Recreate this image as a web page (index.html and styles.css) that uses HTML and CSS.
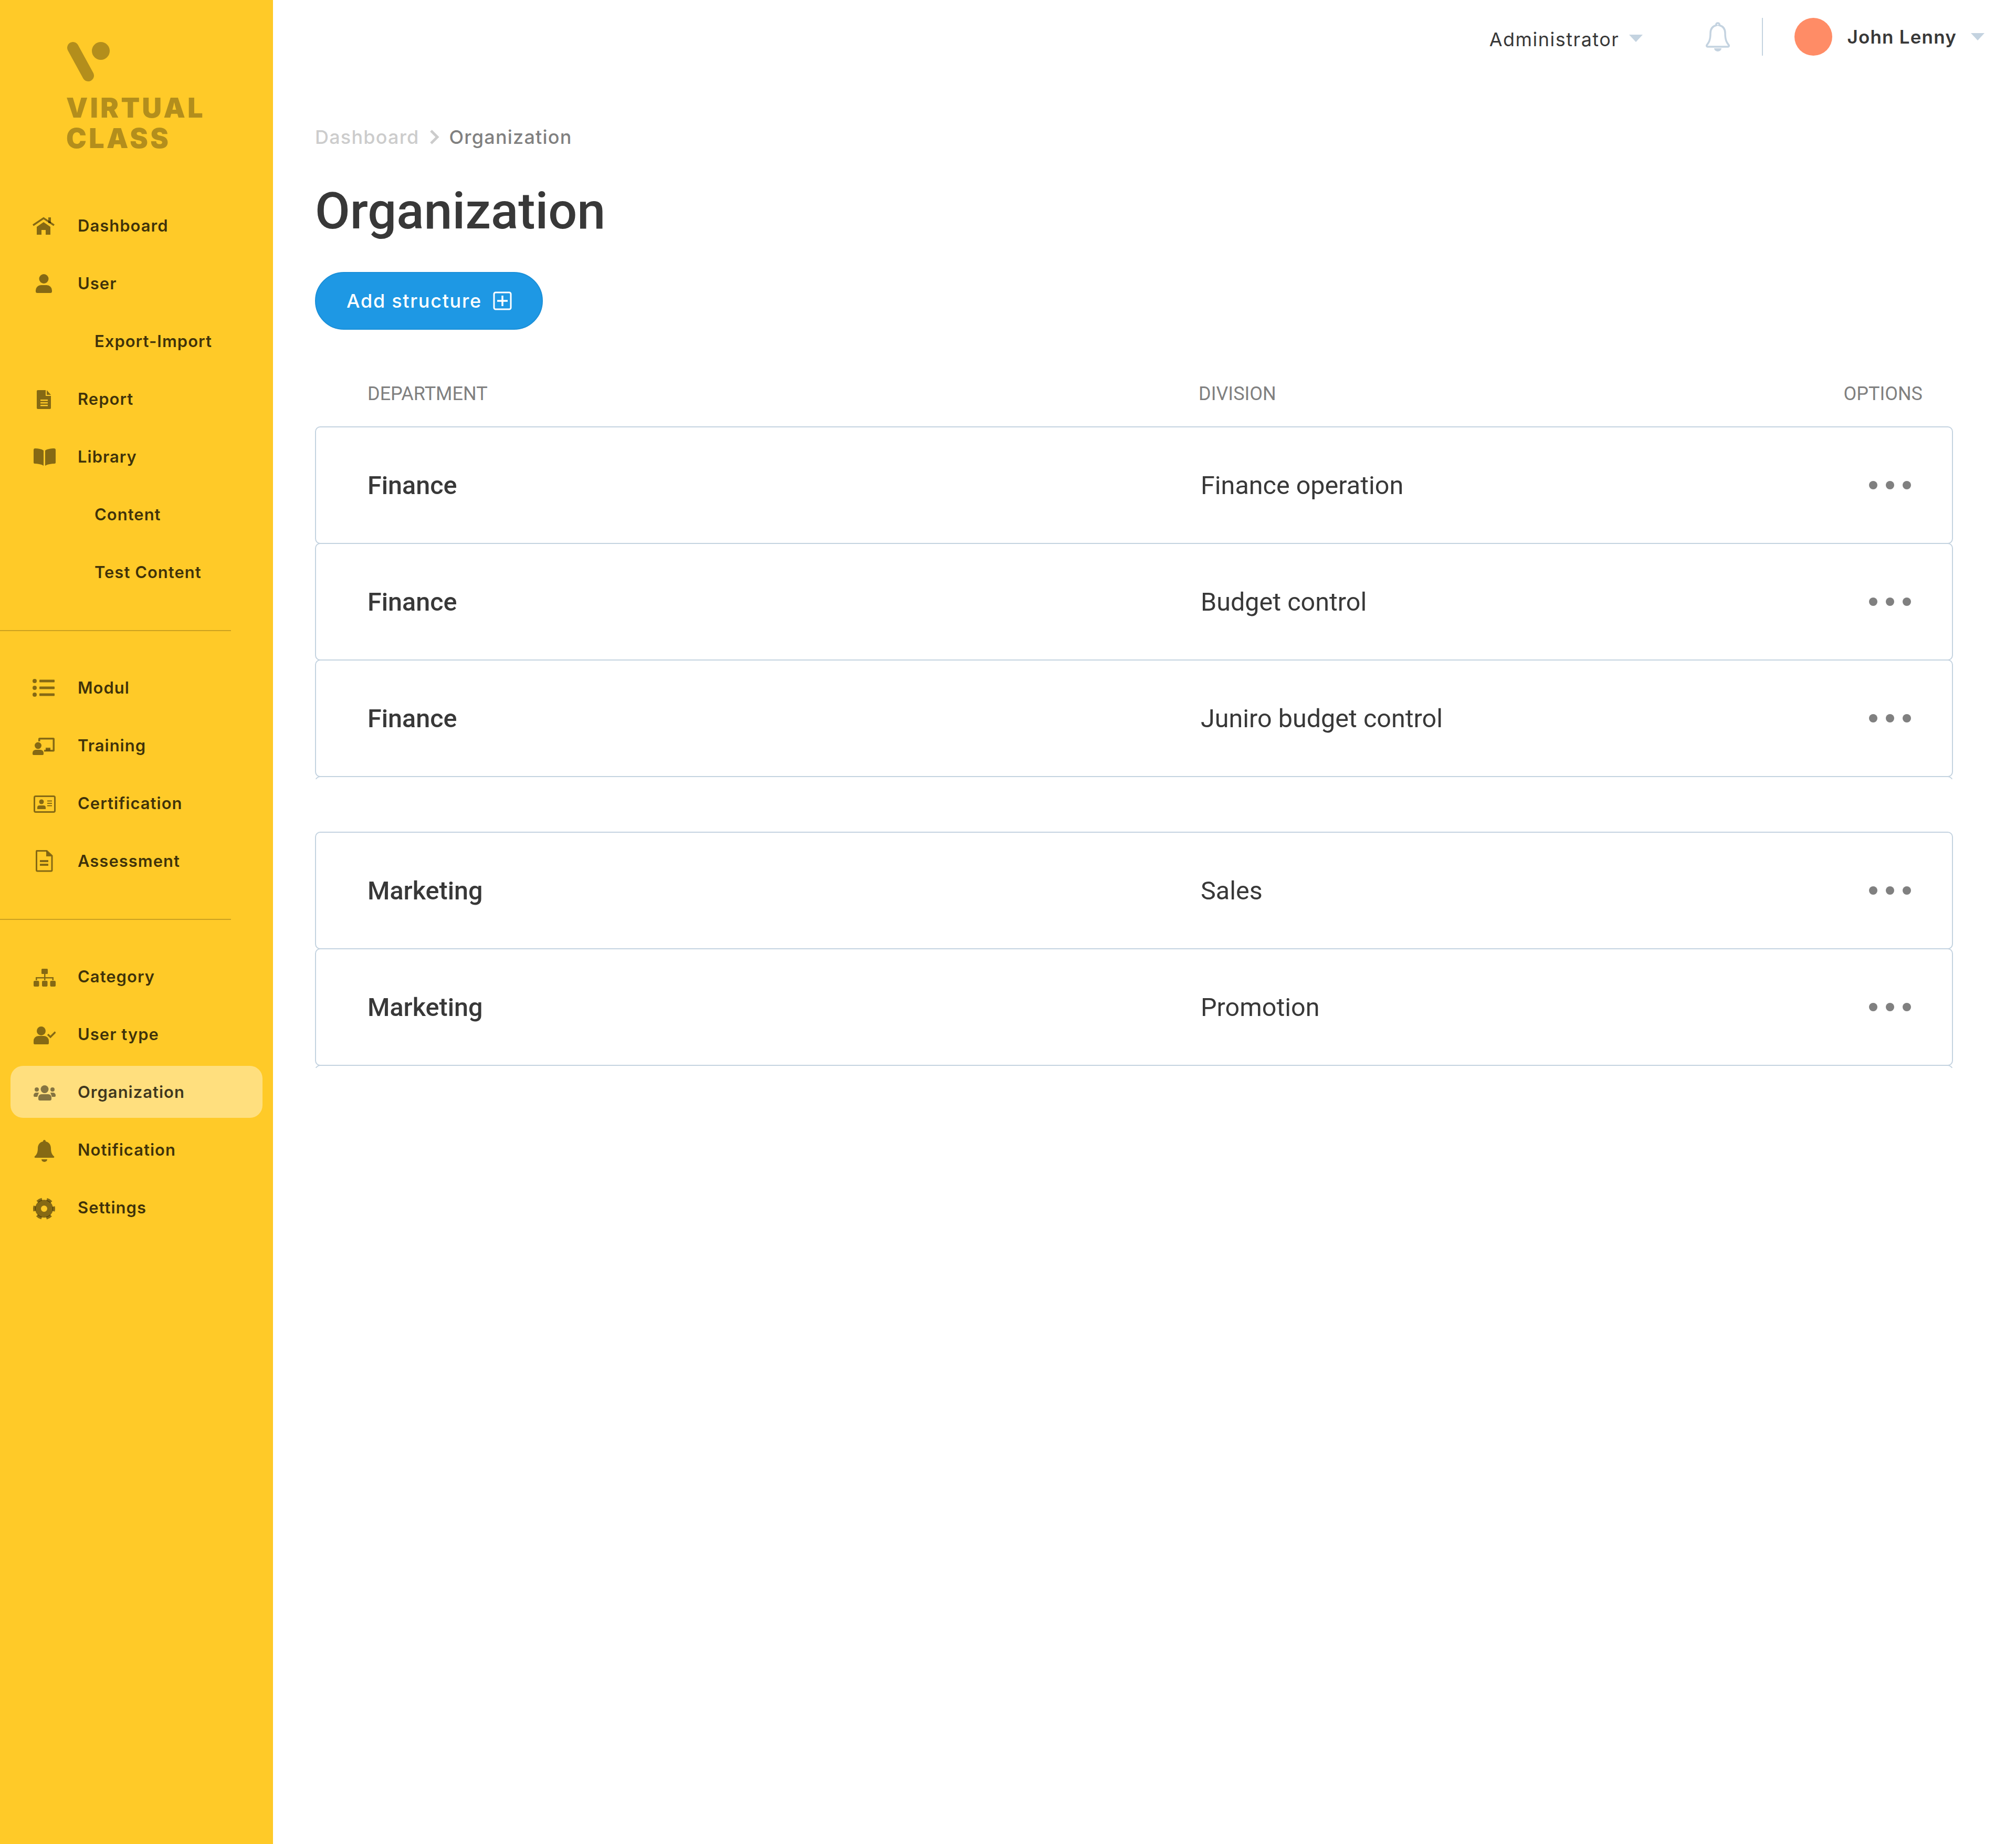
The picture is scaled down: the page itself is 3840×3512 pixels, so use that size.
FILE: index.html
```html
<!DOCTYPE html>
<html lang="en">
<head>
    <meta charset="UTF-8">
    <meta name="viewport" content="width=device-width, initial-scale=1.0">
    <title>Organization</title>
    <link rel="stylesheet" href="styles.css">
</head>
<body>
    <div class="app">
        <aside class="sidebar">
            <div class="logo">
                <svg class="logo-mark" viewBox="0 0 84 76" width="84" height="76">
                    <line x1="11" y1="11" x2="40" y2="64" class="logo-stroke"/>
                    <circle cx="64" cy="17" r="17"/>
                </svg>
                <div class="logo-text">VIRTUAL<br>CLASS</div>
            </div>

            <nav class="nav-group first">
                <a class="nav-item">
                    <svg class="nav-icon" viewBox="0 0 44 44"><path d="M1 21 21 7.5 41 21" fill="none" stroke="currentColor" stroke-width="3.5"/><path d="M30 6h5v11h-5z"/><path d="M8 24 21 15 34 24V39H25V30H17V39H8z"/></svg>
                    <span>Dashboard</span>
                </a>
                <a class="nav-item">
                    <svg class="nav-icon" viewBox="0 0 44 44"><circle cx="21.5" cy="13" r="9"/><path d="M6 35a10 10 0 0 1 10-10h11a10 10 0 0 1 10 10v2a3 3 0 0 1-3 3H9a3 3 0 0 1-3-3z"/></svg>
                    <span>User</span>
                </a>
                <a class="nav-item sub"><span>Export-Import</span></a>
                <a class="nav-item">
                    <svg class="nav-icon" viewBox="0 0 44 44"><path fill-rule="evenodd" d="M10 5H25V16H35V39a2 2 0 0 1-2 2H10a2 2 0 0 1-2-2V7a2 2 0 0 1 2-2zM15 23v2.5H29V23zM15 28v2.5H29V28zM15 33v2.5H29V33z"/><path d="M27 5 35 14H27z"/></svg>
                    <span>Report</span>
                </a>
                <a class="nav-item">
                    <svg class="nav-icon" viewBox="0 0 44 44"><path d="M2 9a3 3 0 0 1 3-3c6 0 12 1 16 4V39c-5-3-11-4-17-4a2 2 0 0 1-2-2z"/><path d="M44 9a3 3 0 0 0-3-3c-6 0-13 1-17 4V39c5-3 12-4 18-4a2 2 0 0 0 2-2z"/></svg>
                    <span>Library</span>
                </a>
                <a class="nav-item sub"><span>Content</span></a>
                <a class="nav-item sub"><span>Test Content</span></a>
            </nav>

            <div class="nav-divider"></div>

            <nav class="nav-group">
                <a class="nav-item">
                    <svg class="nav-icon" viewBox="0 0 44 44"><circle cx="4" cy="9" r="4"/><circle cx="4" cy="22" r="4"/><circle cx="4" cy="35" r="4"/><rect x="13" y="6.5" width="29" height="5" rx="1"/><rect x="13" y="19.5" width="29" height="5" rx="1"/><rect x="13" y="32.5" width="29" height="5" rx="1"/></svg>
                    <span>Modul</span>
                </a>
                <a class="nav-item">
                    <svg class="nav-icon" viewBox="0 0 44 44"><path d="M11 14V9.500a2.500 2.500 0 0 1 2.500-2.500H39.500a2.500 2.500 0 0 1 2.500 2.500V31a2.500 2.500 0 0 1-2.500 2.500H22V30H38.500V10.500H14.500V14z"/><path d="M25 26h9v5h-9z"/><circle cx="10.500" cy="22" r="6.500"/><path d="M0 36a6 6 0 0 1 6-6h9a6 6 0 0 1 6 6v2a2 2 0 0 1-2 2H2a2 2 0 0 1-2-2z"/></svg>
                    <span>Training</span>
                </a>
                <a class="nav-item">
                    <svg class="nav-icon" viewBox="0 0 44 44"><rect x="3.500" y="8.500" width="39" height="30" rx="2.500" fill="none" stroke="currentColor" stroke-width="3"/><circle cx="17" cy="19" r="4.500"/><path d="M9 30a4 4 0 0 1 4-4h8a4 4 0 0 1 4 4v3H9z"/><rect x="28" y="16.500" width="9" height="2"/><rect x="28" y="21" width="9" height="2"/><rect x="28" y="25.500" width="9" height="2"/></svg>
                    <span>Certification</span>
                </a>
                <a class="nav-item">
                    <svg class="nav-icon" viewBox="0 0 44 44"><path d="M8 2.500H27L37 12V39a2 2 0 0 1-2 2H9.500a2 2 0 0 1-2-2V4z" fill="none" stroke="currentColor" stroke-width="3"/><path d="M26 3 36 13H26z"/><rect x="14" y="20" width="16" height="4"/><rect x="14" y="27" width="16" height="4"/></svg>
                    <span>Assessment</span>
                </a>
            </nav>

            <div class="nav-divider"></div>

            <nav class="nav-group">
                <a class="nav-item">
                    <svg class="nav-icon" viewBox="0 0 44 44"><rect x="17" y="7" width="12" height="10" rx="1.500"/><path d="M22 17h2.500v6H40v6h-2.500V25.500H24.500V29H22V25.500H8.500V29H6V23H22z"/><rect x="2" y="30" width="10.500" height="11" rx="2"/><rect x="18" y="30" width="10.500" height="11" rx="2"/><rect x="33.500" y="30" width="10.500" height="11" rx="2"/></svg>
                    <span>Category</span>
                </a>
                <a class="nav-item">
                    <svg class="nav-icon" viewBox="0 0 44 44"><circle cx="16.500" cy="15.500" r="8.500"/><path d="M2 34a9 9 0 0 1 9-9h11a9 9 0 0 1 9 9v5a2 2 0 0 1-2 2H4a2 2 0 0 1-2-2z"/><path d="M29 22l5 5 9.500-9.500" fill="none" stroke="currentColor" stroke-width="3.500"/></svg>
                    <span>User type</span>
                </a>
                <a class="nav-item active">
                    <svg class="nav-icon" viewBox="0 0 44 44"><circle cx="23" cy="16.500" r="7.500"/><circle cx="8" cy="17" r="4"/><circle cx="38" cy="17" r="4"/><path d="M11 32a6 6 0 0 1 6-6h13a6 6 0 0 1 6 6v3a3 3 0 0 1-3 3H14a3 3 0 0 1-3-3z"/><path d="M2 28a5 5 0 0 1 5-5h5l-3 8H4a2 2 0 0 1-2-2z"/><path d="M44 28a5 5 0 0 0-5-5h-5l3 8h5a2 2 0 0 0 2-2z"/></svg>
                    <span>Organization</span>
                </a>
                <a class="nav-item">
                    <svg class="nav-icon bell-icon" viewBox="0 0 44 44"><path d="M22.500 1a2.500 2.500 0 0 1 2.500 3c7 1.500 10 7 10 13 0 10 3.500 13 6 15.500a1.500 1.500 0 0 1-1 2.500H5a1.500 1.500 0 0 1-1-2.500C6.500 30 10 27 10 17c0-6 3-11.500 10-13a2.500 2.500 0 0 1 2.500-3z"/><path d="M17 38h11a5.500 5 0 0 1-11 0z"/></svg>
                    <span>Notification</span>
                </a>
                <a class="nav-item">
                    <svg class="nav-icon gear-icon" viewBox="0 0 44 44"><circle cx="22" cy="22" r="11.500" fill="none" stroke="currentColor" stroke-width="11"/><circle cx="22" cy="22" r="18.500" fill="none" stroke="currentColor" stroke-width="5" stroke-dasharray="10 9.370" stroke-dashoffset="5"/></svg>
                    <span>Settings</span>
                </a>
            </nav>
        </aside>

        <main class="main">
            <header class="topbar">
                <div class="role">Administrator</div>
                <span class="caret role-caret"></span>
                <svg class="top-bell" viewBox="0 0 50 56" width="50" height="56"><path d="M25 2a2.500 2.500 0 0 1 2.500 4c8 2 11.500 8 11.500 15 0 15 4 19 7 23a2 2 0 0 1-1.500 3H5.500A2 2 0 0 1 4 44c3-4 7-8 7-23 0-7 3.500-13 11.500-15A2.500 2.500 0 0 1 25 2z" fill="none" stroke="#c4d3e0" stroke-width="3.500"/><path d="M18 50h14a7 6 0 0 1-14 0z" fill="#c4d3e0"/></svg>
                <div class="top-divider"></div>
                <div class="avatar"></div>
                <div class="user-name">John Lenny</div>
                <span class="caret"></span>
            </header>

            <div class="breadcrumb">
                <span class="crumb-link">Dashboard</span>
                <svg class="crumb-sep" viewBox="0 0 18 28" width="18" height="28"><path d="M2 2 14 14 2 26" fill="none" stroke="#cccccc" stroke-width="5"/></svg>
                <span class="crumb-current">Organization</span>
            </div>

            <h1 class="page-title">Organization</h1>

            <button class="add-btn">
                <span>Add structure</span>
                <svg viewBox="0 0 36 36" width="36" height="36"><rect x="2" y="2" width="32" height="32" rx="3" fill="none" stroke="#fff" stroke-width="3"/><path d="M18 8v20M8 18h20" stroke="#fff" stroke-width="3.500"/></svg>
            </button>

            <div class="table-head">
                <div>DEPARTMENT</div>
                <div>DIVISION</div>
                <div>OPTIONS</div>
            </div>

            <section class="row-group">
                <div class="row"><div class="dept">Finance</div><div class="division">Finance operation</div><div class="dots"><i></i><i></i><i></i></div></div>
                <div class="row"><div class="dept">Finance</div><div class="division">Budget control</div><div class="dots"><i></i><i></i><i></i></div></div>
                <div class="row"><div class="dept">Finance</div><div class="division">Juniro budget control</div><div class="dots"><i></i><i></i><i></i></div></div>
            </section>

            <section class="row-group">
                <div class="row"><div class="dept">Marketing</div><div class="division">Sales</div><div class="dots"><i></i><i></i><i></i></div></div>
                <div class="row"><div class="dept">Marketing</div><div class="division">Promotion</div><div class="dots"><i></i><i></i><i></i></div></div>
            </section>
        </main>
    </div>
</body>
</html>
```

FILE: styles.css
```css
body {
    margin: 0;
    background-color: #fff;
    font-family: Inter, "Liberation Sans", sans-serif;
    color: #383838;
}

.app {
    display: flex;
    min-height: 3512px;
}

/* sidebar */
.sidebar {
    width: 520px;
    flex-shrink: 0;
    background-color: #ffca28;
}

.logo {
    padding: 80px 0 0 128px;
    height: 380px;
    box-sizing: border-box;
    color: #b38e1c;
}

.logo-mark {
    display: block;
    fill: #b38e1c;
}

.logo-stroke {
    stroke: #b38e1c;
    stroke-width: 22;
    stroke-linecap: round;
}

.logo-text {
    margin: 21px 0 0 -2px;
    font-size: 52px;
    font-weight: 900;
    line-height: 58px;
    letter-spacing: 4.4px;
}

.nav-group {
    display: flex;
    flex-direction: column;
    gap: 11px;
    margin: 0 20px;
}

.nav-item {
    display: flex;
    align-items: center;
    height: 99px;
    padding-left: 42px;
    border-radius: 24px;
    font-size: 31px;
    font-weight: 600;
    letter-spacing: 1px;
    color: rgba(0, 0, 0, 0.77);
}

.nav-item.sub {
    padding-left: 160px;
}

.nav-item.active {
    background-color: rgba(255, 255, 255, 0.4);
}

.nav-icon {
    width: 44px;
    height: 44px;
    margin-right: 42px;
    fill: currentColor;
    color: rgba(0, 0, 0, 0.48);
}

.bell-icon,
.gear-icon {
    position: relative;
    top: 2px;
}

.nav-divider {
    width: 440px;
    height: 2px;
    margin: 61px 0 58px;
    background-color: rgba(0, 0, 0, 0.2);
}

/* main column */
.main {
    flex: 1;
    padding: 0 120px 0 80px;
}

.topbar {
    display: flex;
    align-items: center;
    height: 140px;
    margin-right: -60px;
}

.role {
    margin: 10px 0 0 auto;
    font-size: 36px;
    font-weight: 400;
    letter-spacing: 1.5px;
    white-space: nowrap;
}

.caret {
    width: 0;
    height: 0;
    margin-left: 27px;
    border-left: 13px solid transparent;
    border-right: 13px solid transparent;
    border-top: 14px solid #c4d3e0;
}

.role-caret {
    margin-top: 6px;
    margin-left: 19px;
}

.top-bell {
    margin-left: 118px;
}

.top-divider {
    width: 2px;
    height: 72px;
    margin-left: 59px;
    background-color: #c4d3e0;
}

.avatar {
    width: 72px;
    height: 72px;
    margin-left: 60px;
    border-radius: 50%;
    background-color: #ff8c66;
}

.user-name {
    margin-left: 28px;
    font-size: 35px;
    font-weight: 600;
    letter-spacing: 1.2px;
    white-space: nowrap;
}

.breadcrumb {
    display: flex;
    align-items: center;
    height: 50px;
    margin-top: 96px;
    font-size: 36px;
    font-weight: 500;
    letter-spacing: 1.2px;
}

.crumb-link {
    color: #ccc;
}

.crumb-sep {
    margin: 0 19px 0 20px;
}

.crumb-current {
    color: #808080;
}

.page-title {
    margin: 56px 0 0;
    font-family: Roboto, sans-serif;
    font-size: 97px;
    font-weight: 500;
    line-height: 120px;
    color: #383838;
}

.add-btn {
    display: flex;
    align-items: center;
    gap: 21px;
    height: 110px;
    margin-top: 56px;
    padding: 0 57px 0 58px;
    border: 2px solid #1b90d9;
    border-radius: 55px;
    box-sizing: border-box;
    background-color: #1e98e4;
    font-family: Inter, sans-serif;
    font-size: 36px;
    font-weight: 500;
    letter-spacing: 1.7px;
    color: #fff;
}

.table-head {
    display: grid;
    grid-template-columns: 1583px 1fr auto;
    align-items: center;
    height: 60px;
    margin-top: 92px;
    margin-bottom: 32px;
    padding: 0 58px 0 100px;
    font-family: Roboto, sans-serif;
    font-size: 36px;
    font-weight: 400;
    color: #808080;
}

.row-group {
    margin-bottom: 100px;
}

/* rows share a border line, the last one leaves the next corner's stub under it */
.row-group::after {
    content: "";
    display: block;
    height: 20px;
    margin: -2px 0 -14px;
    border: 2px solid #c4d3e0;
    border-radius: 10px;
    box-sizing: border-box;
    clip-path: inset(0 0 14px 0);
}

.row {
    display: grid;
    grid-template-columns: 1587px 1fr auto;
    align-items: center;
    height: 224px;
    padding: 0 78px 0 98px;
    border: 2px solid #c4d3e0;
    border-radius: 10px;
    box-sizing: border-box;
    font-family: Roboto, sans-serif;
    font-size: 48.500px;
    color: #383838;
}

.row + .row {
    margin-top: -2px;
}

.dept {
    font-weight: 500;
}

.dots {
    display: flex;
    gap: 16px;
}

.dots i {
    width: 16px;
    height: 16px;
    border-radius: 50%;
    background-color: #808080;
}
```
